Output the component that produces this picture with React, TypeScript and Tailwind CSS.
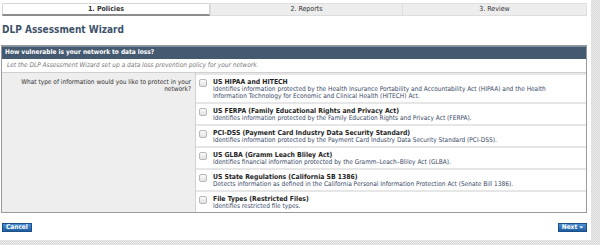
import React from 'react';

export default function App() {
    const options = [
        {
            title: 'US HIPAA and HITECH',
            desc: 'Identifies information protected by the Health Insurance Portability and Accountability Act (HIPAA) and the Health Information Technology for Economic and Clinical Health (HITECH) Act.',
        },
        {
            title: 'US FERPA (Family Educational Rights and Privacy Act)',
            desc: 'Identifies information protected by the Family Education Rights and Privacy Act (FERPA).',
        },
        {
            title: 'PCI-DSS (Payment Card Industry Data Security Standard)',
            desc: 'Identifies information protected by the Payment Card Industry Data Security Standard (PCI-DSS).',
        },
        {
            title: 'US GLBA (Gramm Leach Bliley Act)',
            desc: 'Identifies financial information protected by the Gramm\u2013Leach\u2013Bliley Act (GLBA).',
        },
        {
            title: 'US State Regulations (California SB 1386)',
            desc: 'Detects information as defined in the California Personal Information Protection Act (Senate Bill 1386).',
        },
        {
            title: 'File Types (Restricted Files)',
            desc: 'Identifies restricted file types.',
        },
    ];

    return (
        <div className="w-[600px] h-[245px] flex flex-col bg-white overflow-hidden font-['DejaVu_Sans_Condensed','DejaVu_Sans',sans-serif]">
            <div className="flex flex-1 min-h-0">
                <div className="w-[591px] flex flex-col pl-[2px] pr-[4px]">
                    {/* Steps */}
                    <div className="flex mt-[3px] h-[13px] text-[7px] leading-[11px] text-[#333]">
                        <div className="w-[208px] bg-white border border-[#d6d6d6] border-b-2 border-b-[#8c8c8c] text-center font-bold">
                            1. Policies
                        </div>
                        <div className="w-[193px] bg-[#ededed] border border-[#dedede] text-center">
                            2. Reports
                        </div>
                        <div className="flex-1 bg-[#ededed] border border-[#dedede] border-l-0 text-center">
                            3. Review
                        </div>
                    </div>

                    {/* Title */}
                    <h1 className="mt-[7px] text-[10px] leading-[14px] font-bold text-[#3d5269]">
                        DLP Assessment Wizard
                    </h1>

                    {/* Panel */}
                    <div className="mt-[8px] -ml-[1px] border border-[#9a9a9a]">
                        <div className="h-[13px] bg-[#455a71] border-t border-[#7d8d9e] pl-[3px] text-[6.5px] leading-[11px] font-bold text-white">
                            How vulnerable is your network to data loss?
                        </div>
                        <div className="h-[14px] border-b border-[#d0d0d0] pl-[5px] text-[6.5px] leading-[13px] italic text-[#777]">
                            Let the DLP Assessment Wizard set up a data loss prevention policy for your network.
                        </div>
                        <div className="flex">
                            <div className="w-[194px] shrink-0 bg-[#eeeeee] border-r border-[#d2d2d2] pt-[6px] pr-[4px] pl-[14px] text-right text-[6.5px] leading-[7px] text-[#333]">
                                What type of information would you like to protect in your network?
                            </div>
                            <div className="flex-1 flex flex-col border-t-2 border-[#e6e6e6]">
                                {options.map((o) => (
                                    <div key={o.title} className="flex pl-[3px] pr-[6px] pt-[3px] pb-[2px] border-b-2 border-[#e6e6e6] last:border-b-0">
                                        <div className="w-[8px] h-[8px] mt-[1px] shrink-0 rounded-[2px] border border-[#b8b8b8] bg-gradient-to-b from-[#fafafa] to-[#e2e2e2]" />
                                        <div className="ml-[6px]">
                                            <div className="text-[6.8px] leading-[8px] font-bold text-[#1e1e1e]">{o.title}</div>
                                            <div className="text-[6.5px] leading-[7px] text-[#3a4a68]">{o.desc}</div>
                                        </div>
                                    </div>
                                ))}
                            </div>
                        </div>
                    </div>

                    {/* Footer */}
                    <div className="flex justify-between mt-[10px]">
                        <button className="h-[9px] px-[3px] bg-gradient-to-b from-[#4a8fd3] to-[#1f5d9f] border border-[#1c4f87] text-[6.5px] leading-[7px] font-bold text-white">
                            Cancel
                        </button>
                        <button className="h-[9px] px-[3px] bg-gradient-to-b from-[#4a8fd3] to-[#1f5d9f] border border-[#1c4f87] text-[6.5px] leading-[7px] font-bold text-white">
                            Next »
                        </button>
                    </div>
                </div>
                <div className="flex-1 bg-[#e3e3e3] bg-[repeating-conic-gradient(#d8d8d8_0_25%,#ebebeb_0_50%)] bg-[length:2px_2px]" />
            </div>
            <div className="h-[5px] bg-[#e3e3e3] bg-[repeating-conic-gradient(#d8d8d8_0_25%,#ebebeb_0_50%)] bg-[length:2px_2px]" />
        </div>
    );
}
